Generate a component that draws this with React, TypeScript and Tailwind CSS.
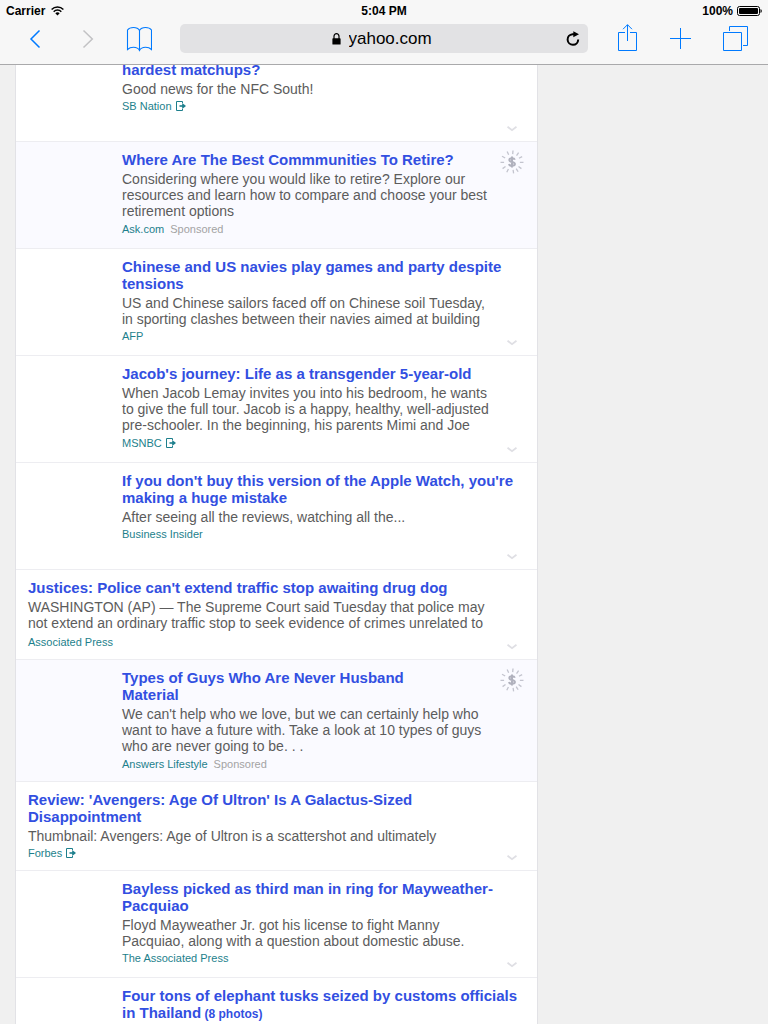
import React from "react";

type Story = {
  title: string[];
  note?: string;
  body: string[];
  source?: string;
  external?: boolean;
  sponsored?: boolean;
  wide?: boolean;
};

const stories: Story[] = [
  {
    title: ["hardest matchups?"],
    body: ["Good news for the NFC South!"],
    source: "SB Nation",
    external: true,
  },
  {
    title: ["Where Are The Best Commmunities To Retire?"],
    body: [
      "Considering where you would like to retire? Explore our",
      "resources and learn how to compare and choose your best",
      "retirement options",
    ],
    source: "Ask.com",
    sponsored: true,
  },
  {
    title: ["Chinese and US navies play games and party despite", "tensions"],
    body: [
      "US and Chinese sailors faced off on Chinese soil Tuesday,",
      "in sporting clashes between their navies aimed at building",
    ],
    source: "AFP",
  },
  {
    title: ["Jacob's journey: Life as a transgender 5-year-old"],
    body: [
      "When Jacob Lemay invites you into his bedroom, he wants",
      "to give the full tour. Jacob is a happy, healthy, well-adjusted",
      "pre-schooler. In the beginning, his parents Mimi and Joe",
    ],
    source: "MSNBC",
    external: true,
  },
  {
    title: ["If you don't buy this version of the Apple Watch, you're", "making a huge mistake"],
    body: ["After seeing all the reviews, watching all the..."],
    source: "Business Insider",
  },
  {
    title: ["Justices: Police can't extend traffic stop awaiting drug dog"],
    body: [
      "WASHINGTON (AP) — The Supreme Court said Tuesday that police may",
      "not extend an ordinary traffic stop to seek evidence of crimes unrelated to",
    ],
    source: "Associated Press",
    wide: true,
  },
  {
    title: ["Types of Guys Who Are Never Husband", "Material"],
    body: [
      "We can't help who we love, but we can certainly help who",
      "want to have a future with. Take a look at 10 types of guys",
      "who are never going to be. . .",
    ],
    source: "Answers Lifestyle",
    sponsored: true,
  },
  {
    title: ["Review: 'Avengers: Age Of Ultron' Is A Galactus-Sized", "Disappointment"],
    body: ["Thumbnail: Avengers: Age of Ultron is a scattershot and ultimately"],
    source: "Forbes",
    external: true,
    wide: true,
  },
  {
    title: ["Bayless picked as third man in ring for Mayweather-", "Pacquiao"],
    body: [
      "Floyd Mayweather Jr. got his license to fight Manny",
      "Pacquiao, along with a question about domestic abuse.",
    ],
    source: "The Associated Press",
  },
  {
    title: ["Four tons of elephant tusks seized by customs officials", "in Thailand"],
    note: "(8 photos)",
    body: [],
  },
];

function ExternalIcon() {
  return (
    <svg width="10" height="10" viewBox="0 0 10 10" fill="none" stroke="#1d7f8c" aria-hidden="true">
      <path d="M6.500 2V.5h-6v9h6V8" />
      <path d="M3.500 5H7" strokeWidth="1.600" />
      <path d="M6.200 1.900 10 5 6.200 8.100z" fill="#1d7f8c" stroke="none" />
    </svg>
  );
}

function SponsorIcon() {
  const rays = [5, 35, 62, 92, 125, 148, 172, 207, 235, 268, 300, 335];
  return (
    <svg width="24" height="24" viewBox="0 0 24 24" stroke="#c3c4ce" strokeWidth="1.300" aria-hidden="true">
      {rays.map((a) => (
        <path key={a} d="M12 .5v3.600" transform={`rotate(${a} 12 12)`} />
      ))}
      <path
        d="M14.800 9.800c-.3-1-1.300-1.500-2.800-1.500s-2.700.6-2.700 1.700c0 2.600 5.600 1.200 5.600 4 0 1.100-1.200 1.800-2.900 1.800s-2.700-.6-3-1.800M12 6.500v11"
        fill="none"
        stroke="#b0b1bd"
        strokeWidth="2"
      />
    </svg>
  );
}

function StoryRow({ story, first, last }: { story: Story; first: boolean; last: boolean }) {
  const height = last ? "" : first ? "min-h-20" : story.wide ? "min-h-[89px]" : "min-h-[107px]";
  return (
    <article
      className={`relative flex pr-3 ${story.wide ? "pl-3" : "pl-[106px]"} ${
        first ? "" : "border-t border-[#ededf1] pt-[9px]"
      } ${height} ${story.sponsored ? "bg-[#fafaff]" : "bg-white"}`}
    >
      <div className={`min-w-0 flex-1 whitespace-nowrap ${first || last ? "" : "pb-[9px]"}`}>
        <h3 className="text-[15px] leading-[17px] font-bold text-[#324fe1]">
          <a href="#story">
            {story.title.map((line, i) => (
              <span key={line} className="block">
                {line}
                {story.note && i === story.title.length - 1 && <span className="text-xs"> {story.note}</span>}
              </span>
            ))}
          </a>
        </h3>
        {story.body.length > 0 && (
          <p className={`mt-[3px] text-sm leading-4 text-[#5c5c5c] ${story.wide && story.body.length > 1 ? "pb-0.5" : ""}`}>
            {story.body.map((line) => (
              <span key={line} className="block">
                {line}
              </span>
            ))}
          </p>
        )}
        {story.source && (
          <p
            className={`flex items-center text-[11px] leading-4 text-[#1d7f8c] ${
              story.sponsored || story.body.length > 2 ? "mt-0.5" : "mt-px"
            }`}
          >
            <a href="#source" className="flex items-center gap-1">
              {story.source}
              {story.external && <ExternalIcon />}
            </a>
            {story.sponsored && <span className="ml-1.5 text-[#a3a3a3]">Sponsored</span>}
          </p>
        )}
      </div>
      {story.sponsored ? (
        <button type="button" aria-label="About this ad" className="absolute top-2 right-[13px]">
          <SponsorIcon />
        </button>
      ) : (
        !last && (
          <button type="button" aria-label="More options" className="absolute right-5 bottom-[9px]">
            <svg width="10" height="6" viewBox="0 0 10 6" fill="none" stroke="#dfdfe4" strokeWidth="1.800" aria-hidden="true">
              <path d="M.5.8 5 4.200 9.500.8" />
            </svg>
          </button>
        )
      )}
    </article>
  );
}

function StatusBar() {
  return (
    <div className="grid h-5 grid-cols-3 items-center px-1.5 pt-0.5 text-xs font-bold text-black">
      <div className="flex items-center gap-1.5">
        <span>Carrier</span>
        <svg width="13" height="10" viewBox="0 0 13 10" fill="none" stroke="#000" strokeWidth="1.500" aria-hidden="true">
          <path d="M.6 3.500a8.300 8.300 0 0 1 11.800 0M2.700 5.700a5.300 5.300 0 0 1 7.600 0" />
          <path d="M6.500 9.500 4.300 7.300a3.100 3.100 0 0 1 4.400 0z" fill="#000" stroke="none" />
        </svg>
      </div>
      <time className="text-center">5:04 PM</time>
      <div className="flex items-center justify-end gap-1">
        <span>100%</span>
        <svg width="25" height="10" viewBox="0 0 25 10" aria-hidden="true">
          <rect x=".5" y=".5" width="22" height="9" rx="2" fill="none" stroke="#000" />
          <rect x="2" y="2" width="19" height="6" rx="1" />
          <path d="M23.500 3q1.300.5 1.300 2t-1.300 2z" />
        </svg>
      </div>
    </div>
  );
}

function ToolIcon({ label, color = "#007aff", width = 1, children }: { label: string; color?: string; width?: number; children: React.ReactNode }) {
  return (
    <button type="button" aria-label={label}>
      <svg width="26" height="29" viewBox="0 0 26 29" fill="none" stroke={color} strokeWidth={width} aria-hidden="true">
        {children}
      </svg>
    </button>
  );
}

function Toolbar() {
  return (
    <nav className="flex items-center pt-1 pb-[11px]">
      <div className="flex w-[180px] shrink-0 gap-[26px] pl-[22px]">
        <ToolIcon label="Back" width={1.5}>
          <path d="M17.500 6.500 9 15l8.500 8.500" />
        </ToolIcon>
        <ToolIcon label="Forward" color="#c2c2c4" width={1.5}>
          <path d="m9.500 6.500 8.800 8.500-8.800 8.500" />
        </ToolIcon>
        <ToolIcon label="Bookmarks" width={1.1}>
          <path d="M13.500 6.500C12.300 4.300 10 3.500 7.500 3.500S2.700 4.300 1.500 6v19.500c1.700-1.600 3.500-2.200 6-2.200s4.800.7 6 3.200c1.200-2.500 3.500-3.200 6-3.200s4.300.6 6 2.200V6c-1.200-1.700-3.500-2.500-6-2.500s-4.800.8-6 3zv20" />
        </ToolIcon>
      </div>
      <div className="relative flex h-[29px] min-w-0 flex-1 items-center justify-center gap-2 rounded-[5px] bg-[#e2e2e4]">
        <svg width="9" height="12" viewBox="0 0 9 12" aria-hidden="true">
          <path d="M2 6V3.200a2.500 2.500 0 0 1 5 0V6" fill="none" stroke="#000" strokeWidth="1.200" />
          <rect x=".4" y="5.300" width="8.200" height="6.200" rx=".6" />
        </svg>
        <input aria-label="Address" defaultValue="yahoo.com" className="w-[88px] bg-transparent text-[17px] leading-6 text-black outline-none" />
        <button type="button" aria-label="Reload" className="absolute right-2 flex">
          <svg width="15" height="16" viewBox="0 0 15 16" fill="none" stroke="#000" strokeWidth="2" aria-hidden="true">
            <path d="M10.200 3.200H7.500a5.300 5.300 0 1 0 5.700 5.300" />
            <path d="M8.300.2 14 3.200 8.300 6.200z" fill="#000" stroke="none" />
          </svg>
        </button>
      </div>
      <div className="flex w-[180px] shrink-0 justify-end gap-[26px] pr-5">
        <ToolIcon label="Share">
          <path d="M7 8.500H.5v18h18v-18H12M9.500.7V17M5 5.200 9.500.7 14 5.200" />
        </ToolIcon>
        <ToolIcon label="New tab">
          <path d="M0 14.500h21M10.500 4v21" />
        </ToolIcon>
        <ToolIcon label="Show tabs">
          <path d="M1.500 8.500h18v18h-18zM7.500 7V2.500h18v19H21" />
        </ToolIcon>
      </div>
    </nav>
  );
}

export default function App() {
  return (
    <div className="flex min-h-screen flex-col bg-[#f0f0f0] font-['Liberation_Sans',Arial,sans-serif]">
      <header className="relative z-10 border-b border-[#a9a9ab] bg-[#f7f7f7]">
        <StatusBar />
        <Toolbar />
      </header>
      <main className="-mt-1 ml-[15px] w-full max-w-[523px] flex-1 border-x border-[#e2e2e6] bg-white">
        {stories.map((s, i) => (
          <StoryRow key={s.title[0]} story={s} first={i === 0} last={i === stories.length - 1} />
        ))}
      </main>
    </div>
  );
}
